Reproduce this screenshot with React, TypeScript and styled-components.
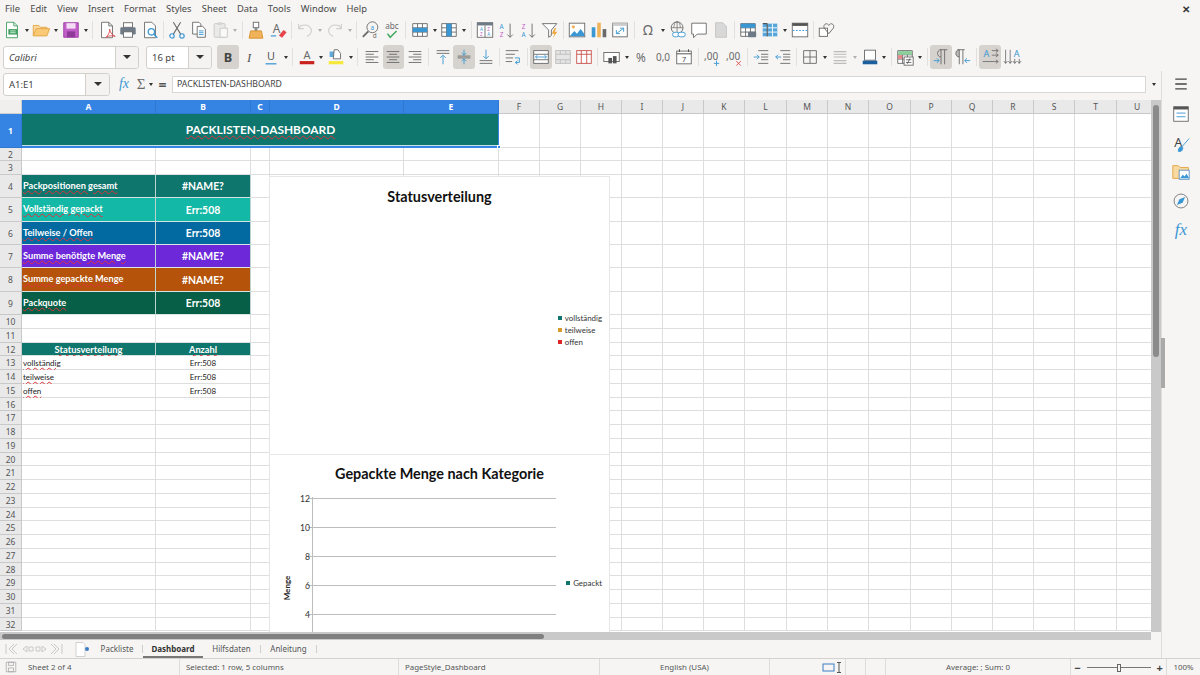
import React from "react";
import styled, { createGlobalStyle } from "styled-components";

const GlobalStyle = createGlobalStyle`
  html, body { margin: 0; padding: 0; overflow: hidden; }
  body { font-family: "Noto Sans", "Open Sans", sans-serif; color: #3d3d3d; }
`;

const G = "#6a6a6a";
const B = "#3b97d3";

const Root = styled.div`
  width: 1200px;
  height: 675px;
  display: flex;
  flex-direction: column;
  background: #f6f5f4;
  overflow: hidden;
`;

const MenuBar = styled.div`
  height: 17px;
  display: flex;
  align-items: center;
  padding: 0 5px;
  gap: 10.2px;
  font-size: 9.4px;
  color: #4a4a4a;
`;
const CloseMark = styled.span`
  margin-left: auto;
  margin-right: 5px;
  font-size: 10px;
  font-weight: 700;
  color: #333;
`;

const Toolbar = styled.div<{ $h: number }>`
  height: ${(p) => p.$h}px;
  display: flex;
  align-items: center;
  padding-left: 1px;
`;
const ToolBtn = styled.div<{ $active?: boolean; $off?: boolean }>`
  width: 21.6px;
  height: 24px;
  flex: none;
  display: flex;
  align-items: center;
  justify-content: center;
  border-radius: 3px;
  background: ${(p) => (p.$active ? "#d6d3cf" : "transparent")};
  opacity: ${(p) => (p.$off ? 0.42 : 1)};
`;
const Caret = styled.div<{ $off?: boolean }>`
  width: 8px;
  flex: none;
  display: flex;
  justify-content: center;
  opacity: ${(p) => (p.$off ? 0.35 : 1)};
  &::after {
    content: "";
    border-left: 2.5px solid transparent;
    border-right: 2.5px solid transparent;
    border-top: 3px solid #333;
  }
`;
const ToolSep = styled.div`
  width: 1px;
  height: 18px;
  flex: none;
  margin: 0 2.5px;
  background: #e2e0dd;
`;
const ComboBox = styled.div<{ $w: number; $btn: number; $mr: number; $italic?: boolean }>`
  width: ${(p) => p.$w}px;
  height: 23px;
  flex: none;
  box-sizing: border-box;
  margin-left: 2px;
  margin-right: ${(p) => p.$mr}px;
  display: grid;
  grid-template-columns: 1fr ${(p) => p.$btn}px;
  border: 1px solid #d3d0cc;
  border-radius: 3px;
  background: #fff;
  font-size: 9.5px;
  font-style: ${(p) => (p.$italic ? "italic" : "normal")};
  color: #444;
`;
const ComboText = styled.div`
  display: flex;
  align-items: center;
  padding-left: 5px;
`;
const ComboBtn = styled.div`
  display: flex;
  align-items: center;
  justify-content: center;
  background: #f4f3f1;
  border-left: 1px solid #d3d0cc;
  border-radius: 0 3px 3px 0;
  &::after {
    content: "";
    border-left: 4px solid transparent;
    border-right: 4px solid transparent;
    border-top: 4px solid #333;
  }
`;

const Body = styled.div`
  flex: 1;
  min-height: 0;
  display: flex;
`;
const Main = styled.div`
  width: 1161px;
  display: flex;
  flex-direction: column;
`;
const Sidebar = styled.div`
  flex: 1;
  position: relative;
  border-left: 1px solid #dfddda;
  display: flex;
  flex-direction: column;
  align-items: center;
  padding-top: 4px;
`;
const SideBtn = styled.div<{ $mb: number }>`
  height: 18px;
  margin-bottom: ${(p) => p.$mb}px;
  display: flex;
  align-items: center;
`;
const SideHandle = styled.div`
  position: absolute;
  left: -1px;
  top: 267px;
  width: 4px;
  height: 50px;
  background: #a9a9a9;
`;

const FormulaBar = styled.div`
  height: 29px;
  flex: none;
  display: flex;
  align-items: center;
  padding: 0 0 3px 1px;
  box-sizing: border-box;
`;
const FormulaInput = styled.div`
  flex: 1;
  height: 17px;
  margin-left: 2px;
  box-sizing: border-box;
  background: #fff;
  border: 1px solid #d9d7d3;
  display: flex;
  align-items: center;
  padding-left: 4px;
  font-size: 8.7px;
  color: #444;
`;
const FormulaIcon = styled.div<{ $w: number }>`
  width: ${(p) => p.$w}px;
  flex: none;
  display: flex;
  justify-content: center;
  color: ${G};
`;
const FxMark = styled.span<{ $size: number }>`
  font-family: "Liberation Serif", serif;
  font-style: italic;
  font-size: ${(p) => p.$size}px;
  color: ${B};
`;
const SigmaMark = styled.span`
  font-family: "Liberation Serif", serif;
  font-size: 15px;
  color: ${G};
`;
const EqMark = styled.span`
  font-size: 14px;
  font-weight: 700;
  color: #555;
`;

const SheetArea = styled.div`
  height: 532px;
  flex: none;
  display: flex;
`;
const GridWrap = styled.div`
  width: 1151px;
  position: relative;
  overflow: hidden;
  background: #fff;
`;
const SheetGrid = styled.div<{ $cols: string; $rows: string }>`
  display: grid;
  width: max-content;
  grid-template-columns: ${(p) => p.$cols};
  grid-template-rows: ${(p) => p.$rows};
`;
const Corner = styled.div`
  background: #f0efed;
  border-right: 1px solid #cfcfcf;
  border-bottom: 1px solid #cfcfcf;
`;
const HeaderCell = styled.div<{ $sel?: boolean }>`
  box-sizing: border-box;
  display: flex;
  align-items: center;
  justify-content: center;
  font-size: 8.5px;
  font-weight: ${(p) => (p.$sel ? 700 : 400)};
  background: ${(p) => (p.$sel ? "#3584e4" : "#e9e9e9")};
  color: ${(p) => (p.$sel ? "#fff" : "#555")};
  border-right: 1px solid ${(p) => (p.$sel ? "#2e78d2" : "#c9c9c9")};
  border-bottom: 1px solid ${(p) => (p.$sel ? "#2e78d2" : "#c9c9c9")};
`;
const Cell = styled.div<{ $bg?: string; $center?: boolean; $lift?: boolean }>`
  box-sizing: border-box;
  min-width: 0;
  display: flex;
  align-items: center;
  justify-content: ${(p) => (p.$center ? "center" : "flex-start")};
  padding-left: ${(p) => (p.$center ? 0 : 1)}px;
  padding-bottom: ${(p) => (p.$lift ? 2 : 0)}px;
  background: ${(p) => p.$bg ?? "#fff"};
  border-right: 1px solid ${(p) => (p.$bg ? "#bcd3cf" : "#dedede")};
  border-bottom: 1px solid ${(p) => (p.$bg ? "#d7e4e2" : "#dedede")};
  font-family: Lato, "Liberation Sans", sans-serif;
  white-space: nowrap;
`;
const TitleCell = styled.div`
  grid-column: 2 / span 5;
  position: relative;
  display: flex;
  align-items: center;
  justify-content: center;
  padding-bottom: 1px;
  background: #0f766e;
  border-bottom: 2px solid #3584e4;
  box-shadow: inset 0 -1px 0 #c9e3e6, inset -1px 0 0 #3584e4;
  font-family: Lato, "Liberation Sans", sans-serif;
`;
const FillHandle = styled.span`
  position: absolute;
  right: -2px;
  bottom: -3px;
  width: 4px;
  height: 4px;
  background: #3584e4;
  border: 1px solid #fff;
  box-sizing: border-box;
`;
const CellText = styled.span<{ $size: number; $bold?: boolean; $white?: boolean; $wavy?: boolean }>`
  font-size: ${(p) => p.$size}px;
  font-weight: ${(p) => (p.$bold ? 700 : 400)};
  color: ${(p) => (p.$white ? "#fff" : "#222")};
  text-decoration: ${(p) => (p.$wavy ? "underline wavy #e0323c 1px" : "none")};
  text-underline-offset: 1px;
`;

const ChartFrame = styled.div<{ $top: number; $h: number }>`
  position: absolute;
  left: 269px;
  top: ${(p) => p.$top}px;
  width: 341px;
  height: ${(p) => p.$h}px;
  box-sizing: border-box;
  background: #fff;
  border: 1px solid #e6e6e6;
`;
const ChartTitle = styled.div<{ $top: number }>`
  margin-top: ${(p) => p.$top}px;
  text-align: center;
  font-family: Lato, "Liberation Sans", sans-serif;
  font-weight: 700;
  font-size: 14.4px;
  color: #111;
  line-height: 18px;
`;
const Legend = styled.div<{ $top: number }>`
  position: absolute;
  right: 7px;
  top: ${(p) => p.$top}px;
  display: flex;
  flex-direction: column;
  gap: 2px;
`;
const LegendRow = styled.div`
  display: flex;
  align-items: center;
  gap: 3px;
  height: 10px;
  font-family: Lato, "Liberation Sans", sans-serif;
  font-size: 7.9px;
  color: #333;
`;
const LegendDot = styled.span<{ $c: string }>`
  width: 4px;
  height: 4px;
  background: ${(p) => p.$c};
`;
const AxisSvg = styled.svg`
  position: absolute;
  left: 0;
  top: 30px;
`;

const VScroll = styled.div`
  flex: 1;
  background: #c9c9c9;
  padding: 5px 2px 0;
`;
const VThumb = styled.div`
  height: 252px;
  border-radius: 3px;
  background: #8b8b8b;
`;
const HScroll = styled.div`
  height: 8px;
  flex: none;
  width: 1151px;
  background: #c9c9c9;
  padding: 1.5px 2px;
  box-sizing: border-box;
`;
const HThumb = styled.div`
  width: 542px;
  height: 5px;
  border-radius: 3px;
  background: #808080;
`;

const TabBar = styled.div`
  height: 18px;
  flex: none;
  display: flex;
  align-items: center;
  font-size: 8px;
  color: #555;
`;
const TabNav = styled.div`
  width: 67px;
  margin-left: 5px;
  display: flex;
  align-items: center;
  flex: none;
`;
const NewSheet = styled.div`
  width: 17px;
  flex: none;
  display: flex;
  align-items: center;
  margin-left: 3px;
`;
const Tab = styled.div<{ $w: number; $active?: boolean }>`
  width: ${(p) => p.$w}px;
  flex: none;
  height: 18px;
  box-sizing: border-box;
  display: flex;
  align-items: center;
  justify-content: center;
  font-weight: ${(p) => (p.$active ? 700 : 400)};
  color: ${(p) => (p.$active ? "#333" : "#555")};
  border-bottom: ${(p) => (p.$active ? "2px solid #777" : "2px solid transparent")};
`;
const TabSep = styled.span`
  width: 1px;
  height: 8px;
  flex: none;
  background: #cfcfcf;
`;

const StatusBar = styled.div`
  height: 17px;
  flex: none;
  display: flex;
  border-top: 1px solid #d4d2cf;
  box-sizing: border-box;
  font-size: 7.9px;
  color: #555;
`;
const StatusField = styled.div<{ $w: number; $center?: boolean; $end?: boolean; $noline?: boolean }>`
  width: ${(p) => p.$w}px;
  flex: none;
  box-sizing: border-box;
  display: flex;
  align-items: center;
  justify-content: ${(p) => (p.$end ? "flex-end" : p.$center ? "center" : "flex-start")};
  padding-left: ${(p) => (p.$center || p.$end ? 0 : 6)}px;
  border-right: ${(p) => (p.$noline ? "none" : "1px solid #dedcd9")};
`;
const ZoomSign = styled.span`
  font-size: 11px;
  font-weight: 700;
  color: #444;
`;
const ZoomTrack = styled.div`
  width: 64px;
  height: 1px;
  margin: 0 6px;
  background: #777;
  position: relative;
`;
const ZoomKnob = styled.span`
  position: absolute;
  left: 30px;
  top: -3px;
  width: 2px;
  height: 6px;
  border: 1px solid #666;
  background: #f6f5f4;
`;

const Svg = ({ children, size = 20 }: { children: React.ReactNode; size?: number }) => (
  <svg width={size} height={size} viewBox="0 0 22 22" fill="none" strokeWidth={1}>
    {children}
  </svg>
);

const T = ({ x, y, s, c, w, children }: { x: number; y: number; s: number; c: string; w?: number; children: React.ReactNode }) => (
  <text x={x} y={y} fontSize={s} fill={c} fontWeight={w ?? 400} fontFamily="Noto Sans, sans-serif" textAnchor="middle">
    {children}
  </text>
);

const gridPaths = "M3 4h16v14H3zM3 8.6h16M3 13.3h16M8.3 4v14M13.7 4v14";

const lines = (rows: [number, number, number][]) => rows.map(([y, a, b]) => `M${a} ${y}H${b}`).join("");

const icons: Record<string, React.ReactNode> = {
  new: (<><path d="M5 2.5h8l4 4v13H5z" fill="#fff" stroke="#3f9f5f" /><path d="M13 2.5v4h4" stroke="#3f9f5f" /><rect x="7" y="10" width="10" height="6" fill="#3f9f5f" /><path d="M9 12h6M9 14h6" stroke="#d8f0de" /></>),
  open: (<><path d="M2.5 17.5V6h6l2 2h7v2" fill="#f8d9a0" stroke="#e3a441" /><path d="M2.5 17.5l3-8h15l-3 8z" fill="#f9c976" stroke="#e3a441" /></>),
  save: (<><path d="M3 3h16v16H3z" fill="#c25fc9" stroke="#9c3fa5" /><rect x="6" y="3.5" width="10" height="6" fill="#f4dcf5" /><rect x="6.5" y="12.5" width="9" height="6.5" fill="#8f3a98" /></>),
  pdf: (<><path d="M5 2.5h8l4 4v13H5z" fill="#fff" stroke={G} /><path d="M13 2.5v4h4" stroke={G} /><path d="M10 19c3-3 4-6 4-9 0 3 2 6 6 8-3-1-7-1-10 1z" stroke="#dc4b4b" /></>),
  print: (<><rect x="6" y="3" width="10" height="5" fill="#fff" stroke={G} /><rect x="2.5" y="8" width="17" height="8" rx="1.5" fill="#6e7a85" /><rect x="6" y="13" width="10" height="6" fill="#fff" stroke={G} /></>),
  preview: (<><path d="M5 2.5h8l4 4v13H5z" fill="#fff" stroke={G} /><circle cx="12.5" cy="13" r="3.5" stroke={B} strokeWidth="1.4" /><path d="M15 15.5l4 4" stroke={B} strokeWidth="1.6" /></>),
  cut: (<><path d="M7 2.5l8 13M15 2.5l-8 13" stroke={G} strokeWidth="1.2" /><circle cx="5.5" cy="17.5" r="2.4" stroke={B} strokeWidth="1.3" /><circle cx="16.5" cy="17.5" r="2.4" stroke={B} strokeWidth="1.3" /></>),
  copy: (<><path d="M4 2.5h7l2 2v11H4z" fill="#fff" stroke={G} /><path d="M9 7h6l3 3v9H9z" fill="#fff" stroke={G} /><path d="M11 12h5M11 14h5M11 16h5" stroke={B} /></>),
  paste: (<><rect x="3.5" y="4" width="12" height="15" rx="1" fill="#ddd" stroke="#888" /><rect x="7" y="2.5" width="5" height="3" fill="#aaa" /><path d="M10 9h8v10h-8z" fill="#fff" stroke="#888" /></>),
  clone: (<><rect x="8" y="2.5" width="6" height="6" fill="#fff" stroke={G} /><path d="M9.5 8.5h3V12h-3z" fill="#888" /><path d="M5 12h12l1.5 8h-15z" fill="#f0b35a" stroke="#d78f2a" /></>),
  clear: (<><T x={9.5} y={14} s={13} c={G}>A</T><path d="M3 17.5h6" stroke={B} strokeWidth="1.3" /><path d="M12 17l5-6 3.5 2.5-5 6z" fill="#e6454c" /></>),
  undo: (<path d="M4 9c3-5 12-5 14 2 0 3-2 6-5 7M4 4v5.5h5.5" stroke="#999" strokeWidth="1.2" />),
  redo: (<path d="M18 9c-3-5-12-5-14 2 0 3 2 6 5 7M18 4v5.5h-5.5" stroke="#999" strokeWidth="1.2" />),
  find: (<><circle cx="12.5" cy="8" r="6" stroke={G} /><T x={12.5} y={10.5} s={7} c={B}>a</T><path d="M8 12.5l-6 6" stroke={G} strokeWidth="2" /><T x={15} y={20} s={7} c={G}>d</T></>),
  spell: (<><T x={11} y={9.5} s={9} c={G}>abc</T><path d="M6 15l3 4 7-7" stroke="#40a860" strokeWidth="1.6" /></>),
  table: (<><path d={gridPaths} stroke={G} fill="#fff" /><rect x="3" y="8.6" width="16" height="4.7" fill={B} /></>),
  col: (<><path d={gridPaths} stroke={G} fill="#fff" /><rect x="8.3" y="4" width="5.4" height="14" fill={B} /></>),
  sort: (<><rect x="2.5" y="3" width="17" height="16" fill="#fff" stroke={G} /><rect x="2.5" y="3" width="17" height="3" fill="#6e7a85" /><path d="M11 6v13" stroke={G} /><T x={7} y={12} s={5} c={B}>A</T><T x={7} y={18} s={5} c="#c25fc9">Z</T><T x={15} y={12} s={5} c="#c25fc9">Z</T><T x={15} y={18} s={5} c={B}>A</T></>),
  asc: (<><T x={6} y={9.5} s={7} c={B}>A</T><T x={6} y={19} s={7} c="#c25fc9">Z</T><path d="M15.5 4v15M12.5 16l3 3 3-3" stroke={G} /></>),
  desc: (<><T x={6} y={9.5} s={7} c="#c25fc9">Z</T><T x={6} y={19} s={7} c={B}>A</T><path d="M15.5 4v15M12.5 16l3 3 3-3" stroke={G} /></>),
  filter: (<><path d="M2.5 4h16l-6 7v6l-3 2v-8z" fill="#fff" stroke={G} /><path d="M16 9l-3 6h3l-2 5 5-7h-3l2-4z" fill="#f0a53a" /></>),
  image: (<><rect x="2.5" y="3.5" width="17" height="15" fill="#fff" stroke={G} /><circle cx="7" cy="7.5" r="1.8" fill="#f0b35a" /><path d="M3 18l5-6 3 3 4-5 4 5v3z" fill={B} /></>),
  chart: (<><rect x="3" y="8" width="4" height="11" fill={B} /><rect x="9" y="3" width="4" height="16" fill="#f0b35a" /><rect x="15" y="10" width="4" height="9" fill={G} /></>),
  pivot: (<><rect x="3" y="3.5" width="16" height="15" fill="#fff" stroke={G} /><rect x="3" y="3.5" width="16" height="3" fill="#ccc" /><path d="M7 15l8-6M11 9h4v4M7 11v4h4" stroke={B} /></>),
  omega: (<T x={11} y={16} s={15} c={G}>Ω</T>),
  link: (<><circle cx="10" cy="8.5" r="6.5" stroke={G} /><path d="M3.5 8.5h13M10 2v13M6.5 8.5c0-4 1-6 3.5-6.5 2.5 .5 3.5 2.5 3.5 6.5" stroke={G} strokeWidth=".8" /><rect x="5" y="13.5" width="7" height="5" rx="2.5" fill="#fff" stroke={B} /><rect x="11" y="13.5" width="8" height="5" rx="2.5" fill="#fff" stroke={B} /></>),
  comment: (<path d="M3 3.5h16v12H9l-4 4v-4H3z" fill="#fff" stroke={G} />),
  note: (<path d="M5 3h8l4 4v12H5z" fill="#d8d8d8" stroke="#c4c4c4" />),
  headers: (<><path d={gridPaths} stroke={G} fill="#fff" /><rect x="3" y="4" width="16" height="4.6" fill={B} /><rect x="11" y="13" width="9" height="6" rx="1" fill="#6e7a85" /></>),
  freeze: (<><rect x="3" y="4" width="16" height="14" fill={B} opacity=".85" /><path d="M3 8.6h16M3 13.3h16M8.3 4v14M13.7 4v14" stroke="#fff" /><path d="M3 4h5v14" stroke="#333" /></>),
  split: (<><rect x="2.5" y="3.5" width="17" height="15" fill="#fff" stroke={G} /><rect x="2.5" y="3.5" width="17" height="3" fill="#555" /><path d="M3 11.5h16" stroke={B} strokeDasharray="2 1.5" /></>),
  shapes: (<><rect x="2.5" y="9" width="9" height="9" fill="#fff" stroke={G} /><path d="M12 18l-5-6c-2-4 3-7 5-3 2-4 7-1 5 3z" transform="translate(1 -3)" stroke={G} /></>),
  bold: (<T x={11} y={16} s={14} c="#444" w={700}>B</T>),
  italic: (<text x="11" y="16" fontSize="14" fill="#555" fontStyle="italic" textAnchor="middle" fontFamily="Liberation Serif, serif">I</text>),
  under: (<><T x={11} y={14} s={12} c="#555">U</T><path d="M5 18.5h12" stroke={B} strokeWidth="1.4" /></>),
  color: (<><T x={11} y={13} s={12} c={G}>A</T><rect x="3" y="15.5" width="16" height="3.5" fill="#c9211e" /></>),
  high: (<><path d="M4 5h8v6H4z" fill={B} opacity=".8" /><path d="M9 3l4 0 3 4v6H8z" fill="#fff" stroke={G} /><rect x="3" y="15.5" width="16" height="3.5" fill="#f5e83b" /></>),
  left: (<path d={lines([[5, 4, 18], [8, 4, 13], [11, 4, 18], [14, 4, 13], [17, 4, 18]])} stroke={G} />),
  center: (<path d={lines([[5, 4, 18], [8, 6.5, 15.5], [11, 4, 18], [14, 6.5, 15.5], [17, 4, 18]])} stroke={G} />),
  right: (<path d={lines([[5, 4, 18], [8, 9, 18], [11, 4, 18], [14, 9, 18], [17, 4, 18]])} stroke={G} />),
  top: (<><path d={lines([[4, 4, 18], [7, 4, 18]])} stroke={G} /><path d="M11 19V9.5M8 12l3-3 3 3" stroke={B} /></>),
  mid: (<><path d={lines([[10, 4, 18], [12, 4, 18]])} stroke={G} /><path d="M11 3v6M8.5 6.5l2.5 2.5 2.5-2.5M11 19v-6M8.5 15.5l2.5-2.5 2.5 2.5" stroke={B} /></>),
  bottom: (<><path d={lines([[15, 4, 18], [18, 4, 18]])} stroke={G} /><path d="M11 3v9.5M8 10l3 3 3-3" stroke={B} /></>),
  wrap: (<><path d={lines([[4, 3, 17], [8, 3, 13], [12, 3, 11], [16, 3, 10]])} stroke={G} /><path d="M13 12h5v5h-4M16 15l-2.5 2 2.5 2" stroke={B} /></>),
  merge: (<><rect x="3" y="4" width="16" height="14" fill="#fff" stroke={G} /><path d="M3 8h16M3 14h16" stroke={G} /><path d="M5 11h12M5 11l2-2M5 11l2 2M17 11l-2-2M17 11l-2 2" stroke={B} /></>),
  mergeb: (<><rect x="3" y="4" width="16" height="14" fill="#e5e5e5" stroke="#bdbdbd" /><path d="M3 8h16M3 14h16M8 4v4M14 4v4M8 14v4M14 14v4" stroke="#bdbdbd" /></>),
  split2: (<><rect x="3" y="4" width="16" height="14" fill="#fff" stroke="#c8524c" /><path d="M3 8h16M8 4v14M14 4v14" stroke="#c8524c" /></>),
  cur: (<><rect x="2" y="6" width="17" height="10" fill="#fff" stroke={G} /><rect x="7" y="12" width="4" height="6" fill="#555" /><rect x="12" y="10" width="4" height="8" fill="#555" /></>),
  pct: (<T x={11} y={16} s={13} c={G}>%</T>),
  num: (<T x={11} y={15} s={11} c={G}>0,0</T>),
  date: (<><rect x="3" y="4.5" width="16" height="14" fill="#fff" stroke={G} /><path d="M3 7.5h16M6 2.5v3M16 2.5v3" stroke="#444" /><T x={11} y={16.5} s={8} c="#444">7</T></>),
  addd: (<><T x={10} y={14} s={11} c={G}>,00</T><path d="M16 15v6M13 18h6" stroke={B} /></>),
  deld: (<><T x={10} y={14} s={11} c={G}>,00</T><path d="M13.5 15.5l5 5M18.5 15.5l-5 5" stroke="#dc4b4b" /></>),
  indent: (<><path d={lines([[4, 8, 19], [8, 11, 19], [11, 11, 19], [14, 11, 19], [18, 8, 19]])} stroke={G} /><path d="M3 11h6M6.5 8.5l2.5 2.5-2.5 2.5" stroke={B} /></>),
  outdent: (<><path d={lines([[4, 8, 19], [8, 11, 19], [11, 11, 19], [14, 11, 19], [18, 8, 19]])} stroke={G} /><path d="M9 11H3M5.5 8.5L3 11l2.5 2.5" stroke={B} /></>),
  border: (<path d="M4 4h14v14H4zM11 4v14M4 11h14" stroke={G} />),
  lstyle: (<path d={lines([[5, 4, 18], [8, 4, 18], [11, 4, 18], [15, 4, 18], [18, 4, 18]])} stroke="#bbb" strokeWidth="1.3" />),
  bcolor: (<><rect x="5" y="3.5" width="12" height="11" fill="#fff" stroke={G} /><rect x="3" y="15" width="16" height="4" fill="#1c5f9f" /></>),
  cond: (<><path d={gridPaths} stroke={G} fill="#fff" /><rect x="3.5" y="4.5" width="15" height="4" fill="#8bd09a" /><rect x="3.5" y="9" width="4.5" height="4" fill="#e68585" /><rect x="10" y="11" width="10" height="9" fill="#fff" stroke={G} /><path d="M12 14h6M12 17h6M16.5 12.5l-3 6" stroke="#444" strokeWidth=".8" /></>),
  ltr: (<><path d="M10 3h8M11 3v16M15 3v16M11 3C6 3 6 11 11 11" stroke={G} /><path d="M3 15h6M6.5 12.5L9 15l-2.5 2.5" stroke={B} /></>),
  rtl: (<><path d="M6 3h8M8 3v16M12 3v16M8 3C3 3 3 11 8 11" fill="#bbb" stroke={G} /><path d="M14 15h6M16.5 12.5L14 15l2.5 2.5" stroke={B} /></>),
  horiz: (<><T x={7} y={11} s={10} c={B}>A</T><path d="M13 4h7M17.5 2l2.5 2-2.5 2M13 9h7M17.5 7l2.5 2-2.5 2M3 16h17M17.5 14l2.5 2-2.5 2" stroke={G} strokeWidth=".9" /></>),
  vert: (<><T x={16} y={11} s={10} c={B}>A</T><path d="M4 3v15M2 15.5L4 18l2-2.5M9 3v15M7 15.5L9 18l2-2.5M14 13v5M12 15.5l2 2.5 2-2.5M19 13v5M17 15.5l2 2.5 2-2.5" stroke={G} strokeWidth=".9" /></>),
  sheetProps: (<><rect x="3" y="3" width="16" height="16" fill="#fff" stroke={G} /><rect x="3" y="3" width="16" height="3" fill="#555" /><path d="M6 10h10M6 14h10" stroke={B} /></>),
  styleA: (<><T x={8} y={14} s={14} c="#444">A</T><path d="M20 5L12 14M8 19c3 1 5-1 5-4l-2-1c-2 0-3 3-3 5z" stroke={B} fill={B} /></>),
  gallery: (<><path d="M2 18V4h6l2 2h9v12z" fill="#f8d9a0" stroke="#e3a441" /><rect x="9" y="9" width="11" height="10" fill="#fff" stroke="#5a90c0" /><path d="M10 18l3-4 2 2 2-3 3 5z" fill={B} /></>),
  nav: (<><circle cx="11" cy="11" r="8.5" stroke={G} /><path d="M16 6l-7 3-3 7 7-3z" fill={B} /></>),
  save2: (<><path d="M3.5 3.5h15v15h-15z" stroke="#999" /><path d="M7 3.5h8v5H7zM7 12.5h8v6H7z" stroke="#999" /></>),
};

const toolbarOne = "new > open > save > | pdf print preview | cut copy paste! >! | clone clear | undo! >! redo! >! | find spell | table > col > | sort asc desc filter | image chart pivot | omega > link comment note | headers freeze > split | shapes";
const toolbarTwo = "bold* italic under > | color > high > | left center* right | top mid* bottom | wrap | merge* mergeb split2 | cur > pct num date | addd deld | indent outdent | border > lstyle >! bcolor > | cond > | ltr* rtl | horiz* vert";

const ToolItems = ({ spec }: { spec: string }) => (
  <>
    {spec.split(" ").map((raw, i) => {
      const off = raw.endsWith("!");
      const active = raw.endsWith("*");
      const name = raw.replace(/[!*]$/, "");
      if (name === "|") return <ToolSep key={i} />;
      if (name === ">") return <Caret key={i} $off={off} />;
      return (
        <ToolBtn key={i} $active={active} $off={off}>
          <Svg>{icons[name]}</Svg>
        </ToolBtn>
      );
    })}
  </>
);

const colNames = "ABCDEFGHIJKLMNOPQRSTU".split("");
const colWidths = [134, 95, 19, 134, 95, 41, 41, 41, 41, 41, 41, 42, 41, 41, 42, 41, 41, 41, 41, 42, 41];
const rowHeights = [34, 13, 14, 23, 24, 23, 23, 24, 23, 14, 14, 13];
for (let i = 0; i < 20; i++) rowHeights.push(i % 4 === 3 ? 13 : 14);

type CellDef = { text: string; bg?: string; center?: boolean; size: number; bold?: boolean; white?: boolean; wavy?: boolean; lift?: boolean };

const kpis: [number, string, string, string][] = [
  [4, "Packpositionen gesamt", "#NAME?", "#0f766e"],
  [5, "Vollständig gepackt", "Err:508", "#14b8a6"],
  [6, "Teilweise / Offen", "Err:508", "#0369a1"],
  [7, "Summe benötigte Menge", "#NAME?", "#6d28d9"],
  [8, "Summe gepackte Menge", "#NAME?", "#b45309"],
  [9, "Packquote", "Err:508", "#065f46"],
];

const cells: Record<string, CellDef> = {
  A12: { text: "Statusverteilung", bg: "#0f766e", center: true, size: 9.4, bold: true, white: true, wavy: true },
  B12: { text: "Anzahl", bg: "#0f766e", center: true, size: 9.2, bold: true, white: true, wavy: true },
  A13: { text: "vollständig", size: 8, wavy: true },
  A14: { text: "teilweise", size: 8, wavy: true },
  A15: { text: "offen", size: 8, wavy: true },
  B13: { text: "Err:508", center: true, size: 8 },
  B14: { text: "Err:508", center: true, size: 8 },
  B15: { text: "Err:508", center: true, size: 8 },
};
kpis.forEach(([r, label, value, bg]) => {
  cells[`A${r}`] = { text: label, bg, size: 9.2, bold: true, white: true, wavy: true, lift: true };
  cells[`B${r}`] = { text: value, bg, center: true, size: 10.4, bold: true, white: true };
});

const ticks = [12, 10, 8, 6, 4];

export default function App() {
  return (
    <Root>
      <GlobalStyle />
      <MenuBar>
        {["File", "Edit", "View", "Insert", "Format", "Styles", "Sheet", "Data", "Tools", "Window", "Help"].map((m) => (
          <span key={m}>{m}</span>
        ))}
        <CloseMark>✕</CloseMark>
      </MenuBar>
      <Toolbar $h={26}>
        <ToolItems spec={toolbarOne} />
      </Toolbar>
      <Toolbar $h={28}>
        <ComboBox $w={136} $btn={23} $mr={5} $italic>
          <ComboText>Calibri</ComboText>
          <ComboBtn />
        </ComboBox>
        <ComboBox $w={66} $btn={23} $mr={5}>
          <ComboText>16 pt</ComboText>
          <ComboBtn />
        </ComboBox>
        <ToolItems spec={toolbarTwo} />
      </Toolbar>
      <Body>
        <Main>
          <FormulaBar>
            <ComboBox $w={107} $btn={24} $mr={3}>
              <ComboText>A1:E1</ComboText>
              <ComboBtn />
            </ComboBox>
            <FormulaIcon $w={22}><FxMark $size={14}>fx</FxMark></FormulaIcon>
            <FormulaIcon $w={12}><SigmaMark>Σ</SigmaMark></FormulaIcon>
            <Caret />
            <FormulaIcon $w={15}><EqMark>=</EqMark></FormulaIcon>
            <FormulaInput>PACKLISTEN-DASHBOARD</FormulaInput>
            <FormulaIcon $w={15}><Caret /></FormulaIcon>
          </FormulaBar>
          <SheetArea>
            <GridWrap>
              <SheetGrid
                $cols={`22px ${colWidths.map((w) => `${w}px`).join(" ")}`}
                $rows={`14px ${rowHeights.map((h) => `${h}px`).join(" ")}`}
              >
                <Corner />
                {colNames.map((c, i) => (
                  <HeaderCell key={c} $sel={i < 5}>{c}</HeaderCell>
                ))}
                {rowHeights.map((_, r) => {
                  const row = r + 1;
                  return (
                    <React.Fragment key={row}>
                      <HeaderCell $sel={row === 1}>{row}</HeaderCell>
                      {row === 1 && (
                        <TitleCell>
                          <CellText $size={11.9} $bold $white $wavy>PACKLISTEN-DASHBOARD</CellText>
                          <FillHandle />
                        </TitleCell>
                      )}
                      {colNames.map((c, i) => {
                        if (row === 1 && i < 5) return null;
                        const def = cells[`${c}${row}`];
                        return (
                          <Cell key={c} $bg={def?.bg} $center={def?.center} $lift={def?.lift}>
                            {def && (
                              <CellText $size={def.size} $bold={def.bold} $white={def.white} $wavy={def.wavy}>
                                {def.text}
                              </CellText>
                            )}
                          </Cell>
                        );
                      })}
                    </React.Fragment>
                  );
                })}
              </SheetGrid>
              <ChartFrame $top={76} $h={279}>
                <ChartTitle $top={11}>Statusverteilung</ChartTitle>
                <Legend $top={136}>
                  <LegendRow><LegendDot $c="#0f766e" />vollständig</LegendRow>
                  <LegendRow><LegendDot $c="#d69a2d" />teilweise</LegendRow>
                  <LegendRow><LegendDot $c="#dc2626" />offen</LegendRow>
                </Legend>
              </ChartFrame>
              <ChartFrame $top={354} $h={200}>
                <ChartTitle $top={10}>Gepackte Menge nach Kategorie</ChartTitle>
                <AxisSvg width="300" height="170" viewBox="0 0 300 170">
                  <path d="M42.5 12V170" stroke="#bdbdbd" />
                  {ticks.map((t, i) => {
                    const y = 13.5 + i * 29;
                    return (
                      <g key={t}>
                        <path d={`M38 ${y}H286`} stroke="#bdbdbd" />
                        <text x="40" y={y + 3} fontSize="8.6" fill="#333" textAnchor="end" fontFamily="Lato, sans-serif">{t}</text>
                      </g>
                    );
                  })}
                  <text transform="translate(19.5 103) rotate(-90)" fontSize="8" fontWeight="700" fill="#222" textAnchor="middle" fontFamily="Lato, sans-serif">Menge</text>
                </AxisSvg>
                <Legend $top={123}>
                  <LegendRow><LegendDot $c="#0f766e" />Gepackt</LegendRow>
                </Legend>
              </ChartFrame>
            </GridWrap>
            <VScroll>
              <VThumb />
            </VScroll>
          </SheetArea>
          <HScroll>
            <HThumb />
          </HScroll>
          <TabBar>
            <TabNav>
              <svg width="62" height="12" viewBox="0 0 62 12" fill="none" stroke="#c9c9c9">
                <path d="M1 1v10M9 1L4 6l5 5M12 1L7 6l5 5M22 3l-4 3 4 3zM24 4h4v4h-4zM31 4h4v4h-4zM37 3l4 3-4 3zM46 1l5 5-5 5M49 1l5 5-5 5M57 1v10" />
              </svg>
            </TabNav>
            <NewSheet>
              <svg width="16" height="15" viewBox="0 0 16 15" fill="none">
                <path d="M1 .5h7l2 2v12H1z" fill="#fff" stroke="#d0d0d0" />
                <circle cx="12" cy="7" r="2" fill="#3b7dc4" />
              </svg>
            </NewSheet>
            <Tab $w={50}>Packliste</Tab>
            <TabSep />
            <Tab $w={60} $active>Dashboard</Tab>
            <Tab $w={57}>Hilfsdaten</Tab>
            <TabSep />
            <Tab $w={55}>Anleitung</Tab>
            <TabSep />
          </TabBar>
        </Main>
        <Sidebar>
          <SideHandle />
          <SideBtn $mb={12}><Svg size={18}><path d="M4 5h14M4 11h14M4 17h14" stroke="#444" strokeWidth="1.6" /></Svg></SideBtn>
          <SideBtn $mb={12}><Svg size={20}>{icons.sheetProps}</Svg></SideBtn>
          <SideBtn $mb={10}><Svg size={20}>{icons.styleA}</Svg></SideBtn>
          <SideBtn $mb={11}><Svg size={20}>{icons.gallery}</Svg></SideBtn>
          <SideBtn $mb={11}><Svg size={18}>{icons.nav}</Svg></SideBtn>
          <SideBtn $mb={0}><FxMark $size={17}>fx</FxMark></SideBtn>
        </Sidebar>
      </Body>
      <StatusBar>
        <StatusField $w={22} $center $noline><Svg size={14}>{icons.save2}</Svg></StatusField>
        <StatusField $w={158}>Sheet 2 of 4</StatusField>
        <StatusField $w={219}>Selected: 1 row, 5 columns</StatusField>
        <StatusField $w={201}>PageStyle_Dashboard</StatusField>
        <StatusField $w={170} $center>English (USA)</StatusField>
        <StatusField $w={76} $end>
          <svg width="26" height="13" viewBox="0 0 26 13" fill="none">
            <rect x="4" y="3" width="11" height="7" stroke="#3b7dc4" />
            <path d="M18 1.5h4M20 1.5v10M18 11.5h4" stroke="#555" />
          </svg>
        </StatusField>
        <StatusField $w={20} />
        <StatusField $w={20} />
        <StatusField $w={185} $center>Average: ; Sum: 0</StatusField>
        <StatusField $w={96} $center>
          <ZoomSign>−</ZoomSign>
          <ZoomTrack><ZoomKnob /></ZoomTrack>
          <ZoomSign>+</ZoomSign>
        </StatusField>
        <StatusField $w={33} $center $noline>100%</StatusField>
      </StatusBar>
    </Root>
  );
}
